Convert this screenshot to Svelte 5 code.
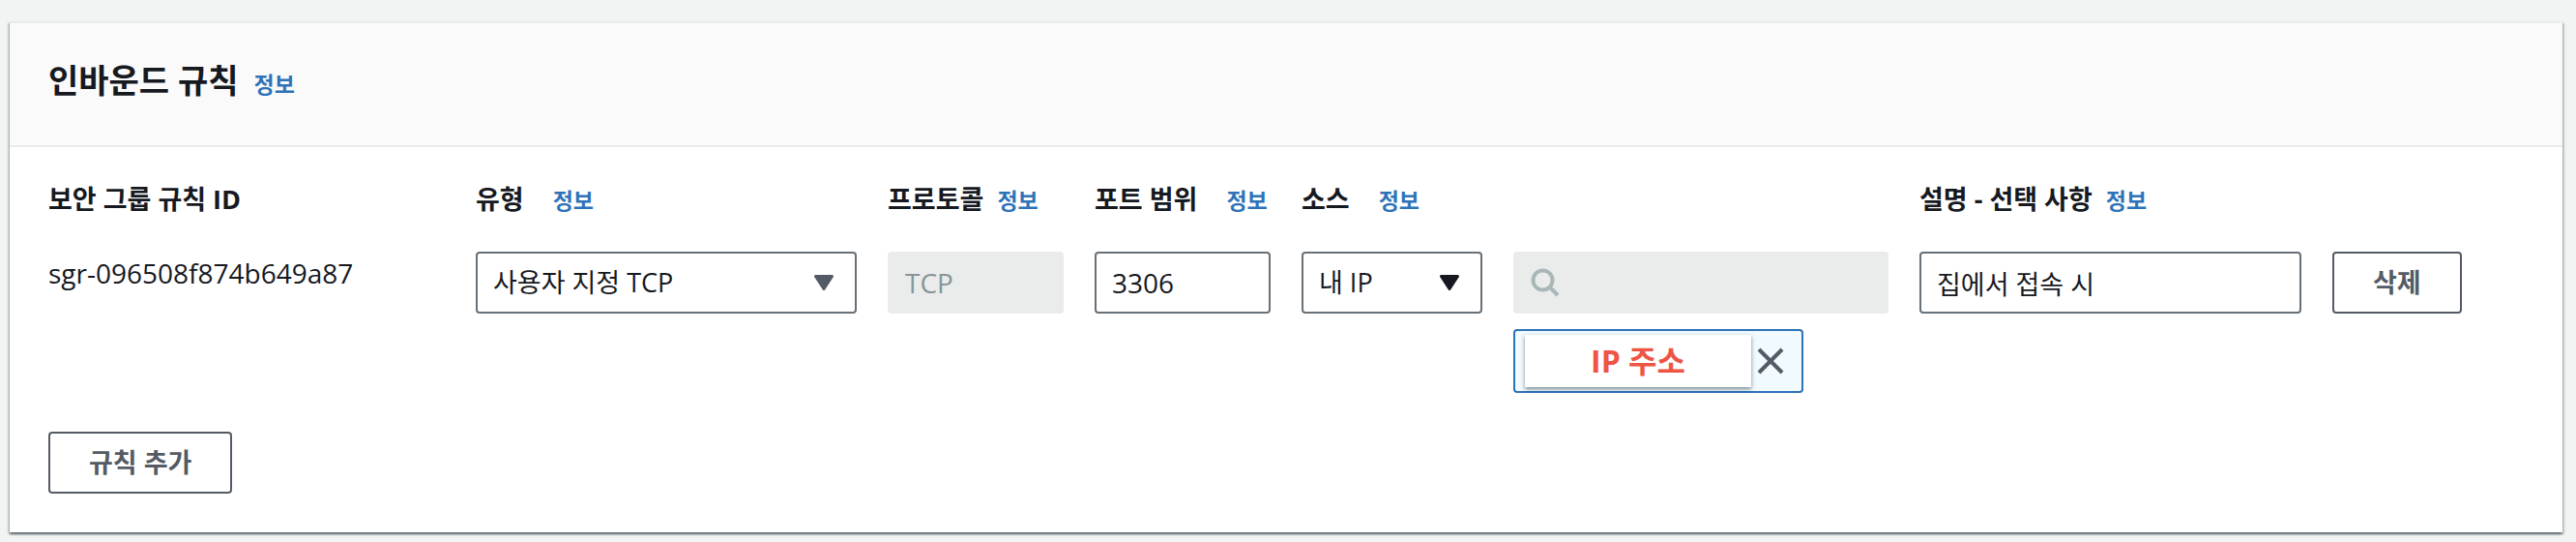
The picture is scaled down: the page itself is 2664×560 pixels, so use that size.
<script>
  let type = $state('tcp');
  let port = $state('3306');
  let source = $state('my-ip');
  let description = $state('집에서 접속 시');
  let hasAddress = $state(true);
</script>

{#snippet arrow()}
  <svg class="arrow" viewBox="0 0 20 16" aria-hidden="true">
    <path d="M1.5 1.5h17L10 14.500z" fill="currentColor" stroke="currentColor" stroke-width="3" stroke-linejoin="round" />
  </svg>
{/snippet}

<section class="panel">
  <header>
    <h2>인바운드 규칙</h2>
    <a href="#info">정보</a>
  </header>

  <div class="body">
    <div class="rule">
      <div class="field">
        <div class="head"><span>보안 그룹 규칙 ID</span></div>
        <div class="rule-id">sgr-096508f874b649a87</div>
      </div>

      <div class="field">
        <div class="head wide"><label for="type">유형</label><a href="#type-info">정보</a></div>
        <div class="select muted">
          <select id="type" bind:value={type}>
            <option value="tcp">사용자 지정 TCP</option>
          </select>
          {@render arrow()}
        </div>
      </div>

      <div class="field">
        <div class="head"><label for="protocol">프로토콜</label><a href="#protocol-info">정보</a></div>
        <input id="protocol" class="latin" value="TCP" disabled />
      </div>

      <div class="field">
        <div class="head wide"><label for="port">포트 범위</label><a href="#port-info">정보</a></div>
        <input id="port" class="latin" bind:value={port} />
      </div>

      <div class="field">
        <div class="head wide"><label for="source">소스</label><a href="#source-info">정보</a></div>
        <div class="select">
          <select id="source" bind:value={source}>
            <option value="my-ip">내 IP</option>
          </select>
          {@render arrow()}
        </div>
      </div>

      <div class="field">
        <div class="head"></div>
        <div class="search">
          <svg viewBox="0 0 30 30" aria-hidden="true">
            <circle cx="12.500" cy="12.500" r="10" fill="none" stroke="currentColor" stroke-width="4" />
            <path d="M19.500 19.500L28 28" stroke="currentColor" stroke-width="4" />
          </svg>
          <input type="search" aria-labelledby="source" disabled />
        </div>
        {#if hasAddress}
          <div class="token">
            <span>IP 주소</span>
            <button aria-labelledby="source" onclick={() => (hasAddress = false)}>
              <svg viewBox="0 0 28 28" aria-hidden="true">
                <path d="M2 2L26 26M26 2L2 26" stroke="currentColor" stroke-width="4" />
              </svg>
            </button>
          </div>
        {/if}
      </div>

      <div class="field">
        <div class="head"><label for="description">설명 - 선택 사항</label><a href="#description-info">정보</a></div>
        <input id="description" bind:value={description} />
      </div>

      <div class="field">
        <div class="head"></div>
        <button class="button">삭제</button>
      </div>
    </div>

    <button class="button">규칙 추가</button>
  </div>
</section>

<style>
  :global(body) {
    margin: 0;
    background: #f2f3f3;
  }

  .panel,
  .panel * {
    box-sizing: border-box;
  }

  .panel {
    margin: 22px 14px 10px 10px;
    border-top: 2px solid #eaeceb;
    background: #fff;
    box-shadow:
      0 2px 2px rgba(0, 28, 36, 0.5),
      2px 2px 2px rgba(0, 28, 36, 0.15),
      -2px 2px 2px rgba(0, 28, 36, 0.15);
    color: #16191f;
    font: 27px/40px "Open Sans", "Noto Sans CJK KR", sans-serif;
  }

  header {
    display: flex;
    align-items: baseline;
    gap: 16px;
    padding: 32px 40px 40px;
    border-bottom: 2px solid #eaeceb;
    background: #fafafa;
  }

  h2 {
    margin: 0;
    font-size: 34px;
    line-height: 54px;
    font-weight: 700;
  }

  a {
    color: #2e73b8;
    font-size: 23px;
    font-weight: 700;
    text-decoration: none;
  }

  .body {
    padding: 34px 40px 40px;
  }

  .rule {
    display: grid;
    grid-template-columns: 410fr 394fr 182fr 182fr 187fr 388fr 395fr 198fr;
    gap: 32px;
    margin-bottom: 40px;
  }

  .field {
    min-width: 0;
  }

  .head {
    display: flex;
    align-items: baseline;
    gap: 14px;
    height: 44px;
    margin-bottom: 30px;
    font-weight: 700;
    white-space: nowrap;
  }

  .head.wide {
    gap: 30px;
  }

  .rule-id {
    font-size: 28px;
    line-height: 44px;
  }

  input,
  select {
    display: block;
    width: 100%;
    height: 64px;
    padding: 0 16px;
    border: 2px solid #687078;
    border-radius: 4px;
    background: #fff;
    color: #16191f;
    font: inherit;
    appearance: none;
  }

  .latin {
    font-size: 28px;
  }

  input:disabled {
    border-color: #eaeceb;
    background: #eaeceb;
    color: #879596;
  }

  .select {
    position: relative;
  }

  .arrow {
    position: absolute;
    top: 24px;
    right: 24px;
    width: 20px;
    height: 16px;
    pointer-events: none;
  }

  .muted .arrow {
    color: #545b64;
  }

  .search {
    display: flex;
    align-items: center;
    padding-left: 18px;
    border-radius: 4px;
    background: #eaeceb;
    color: #aab7b8;
  }

  .search svg {
    flex: none;
    width: 30px;
    height: 30px;
  }

  .token {
    display: flex;
    align-items: center;
    width: 300px;
    max-width: 100%;
    height: 66px;
    margin-top: 16px;
    padding-left: 10px;
    border: 2px solid #2e73b8;
    border-radius: 4px;
    background: #f1faff;
  }

  .token span {
    flex: 0 1 234px;
    background: #fff;
    box-shadow: 0 2px 4px rgba(0, 28, 36, 0.5);
    color: #ee5544;
    font-size: 32px;
    font-weight: 700;
    line-height: 54px;
    text-align: center;
  }

  .token button {
    display: flex;
    padding: 6px;
    border: 0;
    background: none;
    color: #545b64;
  }

  .token svg {
    width: 28px;
    height: 28px;
  }

  .button {
    height: 64px;
    padding: 0 40px;
    border: 2px solid #545b64;
    border-radius: 4px;
    background: #fff;
    color: #545b64;
    font: inherit;
    font-weight: 700;
    white-space: nowrap;
  }
</style>
